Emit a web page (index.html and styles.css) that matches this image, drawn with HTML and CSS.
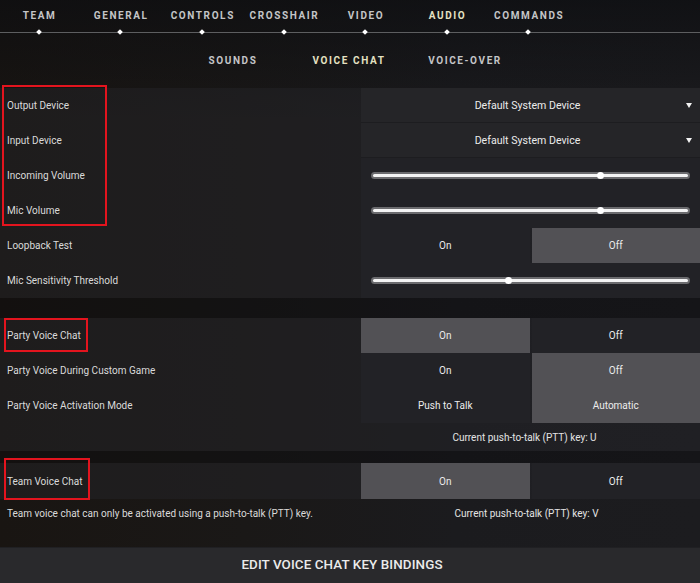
FILE: index.html
```html
<!DOCTYPE html>
<html>
<head>
<meta charset="utf-8">
<link rel="stylesheet" href="styles.css">
</head>
<body>
<div class="page">
  <nav class="tabs">
    <div class="tab"><span>TEAM</span><i class="dot"></i></div>
    <div class="tab"><span>GENERAL</span><i class="dot"></i></div>
    <div class="tab"><span>CONTROLS</span><i class="dot"></i></div>
    <div class="tab"><span>CROSSHAIR</span><i class="dot"></i></div>
    <div class="tab"><span>VIDEO</span><i class="dot"></i></div>
    <div class="tab active"><span>AUDIO</span><i class="dot"></i></div>
    <div class="tab"><span>COMMANDS</span><i class="dot"></i></div>
  </nav>
  <div class="subtabs">
    <div class="subtab">SOUNDS</div>
    <div class="subtab active">VOICE CHAT</div>
    <div class="subtab">VOICE-OVER</div>
  </div>

  <section class="group">
    <div class="row">
      <div class="label">Output Device</div>
      <div class="cell span2 dropdown dd1"><span class="ddtext">Default System Device</span><i class="caret"></i></div>
    </div>
    <div class="row">
      <div class="label">Input Device</div>
      <div class="cell span2 dropdown"><span class="ddtext">Default System Device</span><i class="caret"></i></div>
    </div>
    <div class="row">
      <div class="label">Incoming Volume</div>
      <div class="cell span2 slider"><div class="track"><div class="fill"></div><i class="thumb" style="left:72%"></i></div></div>
    </div>
    <div class="row">
      <div class="label">Mic Volume</div>
      <div class="cell span2 slider"><div class="track"><div class="fill"></div><i class="thumb" style="left:72%"></i></div></div>
    </div>
    <div class="row">
      <div class="label">Loopback Test</div>
      <div class="cell opt">On</div>
      <div class="cell opt on">Off</div>
    </div>
    <div class="row">
      <div class="label">Mic Sensitivity Threshold</div>
      <div class="cell span2 slider"><div class="track"><div class="fill"></div><i class="thumb" style="left:43%"></i></div></div>
    </div>
  </section>

  <div class="gap g20"></div>

  <section class="group">
    <div class="row">
      <div class="label">Party Voice Chat</div>
      <div class="cell opt on">On</div>
      <div class="cell opt">Off</div>
    </div>
    <div class="row">
      <div class="label">Party Voice During Custom Game</div>
      <div class="cell opt">On</div>
      <div class="cell opt on">Off</div>
    </div>
    <div class="row">
      <div class="label">Party Voice Activation Mode</div>
      <div class="cell opt">Push to Talk</div>
      <div class="cell opt on">Automatic</div>
    </div>
    <div class="row note">
      <div class="label"></div>
      <div class="span2 keytext">Current push-to-talk (PTT) key: U</div>
    </div>
  </section>

  <div class="gap g12"></div>

  <section class="group team">
    <div class="row">
      <div class="label">Team Voice Chat</div>
      <div class="cell opt on">On</div>
      <div class="cell opt">Off</div>
    </div>
    <div class="row note2">
      <div class="label">Team voice chat can only be activated using a push-to-talk (PTT) key.</div>
      <div class="span2 keytext">Current push-to-talk (PTT) key: V</div>
    </div>
  </section>

  <div class="spacer"></div>

  <footer class="bindings">EDIT VOICE CHAT KEY BINDINGS</footer>

  <div class="mark m1"></div>
  <div class="mark m2"></div>
  <div class="mark m3"></div>
</div>
</body>
</html>
```

FILE: styles.css
```css
* { box-sizing: border-box; }
html, body { margin: 0; padding: 0; }
body {
  width: 700px;
  height: 583px;
  overflow: hidden;
  background: #131417;
  font-family: Roboto, "Liberation Sans", sans-serif;
  color: #dcdcdc;
}
.page {
  position: relative;
  width: 700px;
  height: 583px;
  display: flex;
  flex-direction: column;
  background:
    linear-gradient(to bottom, rgba(12,13,16,0.7) 0, rgba(12,13,16,0.2) 88px, rgba(0,0,0,0) 120px),
    linear-gradient(to right, #191512 0, #1a1817 35%, #1b1b1e 65%, #1c1c1f 100%);
}

/* top tabs */
.tabs {
  display: flex;
  height: 36px;
  margin-left: -2px;
  background: linear-gradient(#5d5e60, #5d5e60) no-repeat 0 32px / 100% 1px;
}
.tab {
  width: 81.6px;
  display: flex;
  flex-direction: column;
  align-items: center;
  padding-top: 10px;
}
.tab span {
  font-size: 10px;
  line-height: 12px;
  font-weight: 700;
  letter-spacing: 1.6px;
  color: #c4c5c7;
  white-space: nowrap;
  margin-right: -1.6px;
}
.tab.active span { color: #e4e1c2; }
.dot {
  display: block;
  width: 4px;
  height: 4px;
  margin-top: 8px;
  background: #ffffff;
  transform: rotate(45deg);
}

.subtabs {
  display: flex;
  justify-content: center;
  height: 52px;
  padding-top: 19px;
  padding-right: 2px;
}
.subtab {
  width: 116px;
  text-align: center;
  font-size: 10px;
  line-height: 12px;
  font-weight: 700;
  letter-spacing: 1.6px;
  color: #c4c5c7;
}
.subtab.active { color: #e4e1c2; }

/* groups */
.group {
  background: rgba(38,38,42,0.45);
}
.row {
  display: grid;
  grid-template-columns: 359px 1fr 1fr;
  column-gap: 2px;
  height: 35px;
}
.label {
  display: flex;
  align-items: center;
  padding-left: 7px;
  font-size: 10px;
  color: #dadada;
  white-space: nowrap;
}
.cell {
  display: flex;
  align-items: center;
  justify-content: center;
  background: #222226;
  font-size: 10px;
  color: #ececec;
}
.span2 { grid-column: 2 / 4; }
.opt.on { background: #525155; }

.dropdown {
  background: #252528;
  border-bottom: 1px solid #1d1d20;
  padding: 0 8px 0 8px;
}
.ddtext { flex: 1; text-align: center; font-size: 10.6px; }
.caret {
  width: 0;
  height: 0;
  border-left: 3.5px solid transparent;
  border-right: 3.5px solid transparent;
  border-top: 5px solid #f2f2f2;
}

.slider {
  padding: 0 10px;
}
.track {
  position: relative;
  flex: 1;
  height: 7px;
  border-radius: 4px;
  background: #6b6b6e;
  display: flex;
  align-items: center;
  padding: 0 2px;
}
.fill {
  flex: 1;
  height: 3px;
  border-radius: 2px;
  background: #f4f4f4;
}
.thumb {
  position: absolute;
  top: 50%;
  width: 7px;
  height: 7px;
  margin: -3.5px 0 0 -3.5px;
  border-radius: 50%;
  background: #ffffff;
}

.note { height: 28px; }
.keytext {
  display: flex;
  align-items: center;
  justify-content: center;
  font-size: 10px;
  color: #e4e4e4;
  padding-right: 12px;
}
.team { background: transparent; }
.team .row:first-child { background: rgba(38,38,42,0.45); height: 36px; }
.note2 { height: 28px; }
.note2 .keytext { padding-right: 8px; }

.gap { background: rgba(10,10,12,0.35); }
.g20 { height: 20px; }
.g12 { height: 12px; }
.spacer { flex: 1; }

.bindings {
  height: 36px;
  display: flex;
  align-items: center;
  justify-content: center;
  background: #29292c;
  font-size: 13.4px;
  font-weight: 500;
  letter-spacing: 0.1px;
  color: #ebebeb;
  padding-right: 16px;
  padding-bottom: 2px;
  border-top: 1px solid #202023;
}

/* annotation boxes */
.mark {
  position: absolute;
  border: 2px solid #e3141e;
}
.m1 { left: 2px; top: 85px; width: 105px; height: 141px; }
.m2 { left: 4px; top: 318px; width: 84px; height: 34px; }
.m3 { left: 4px; top: 458px; width: 86px; height: 42px; }
```
